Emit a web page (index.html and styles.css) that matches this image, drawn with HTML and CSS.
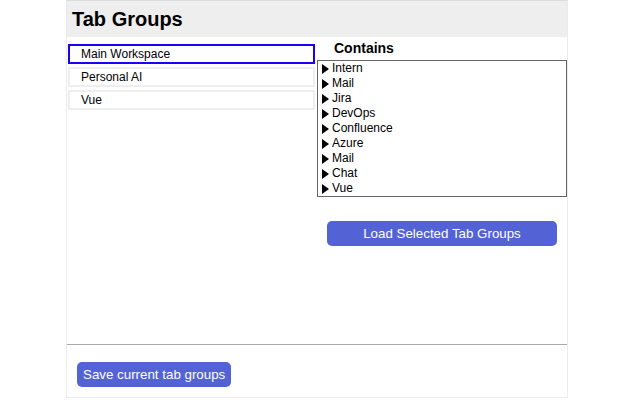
FILE: index.html
```html
<!DOCTYPE html>
<html>
<head>
<meta charset="utf-8">
<title>Tab Groups</title>
<link rel="stylesheet" href="styles.css">
</head>
<body>
<div class="container">
  <div class="header">Tab Groups</div>
  <div class="main">
    <div class="groups">
      <div class="group selected">Main Workspace</div>
      <div class="group">Personal AI</div>
      <div class="group">Vue</div>
    </div>
    <div class="contents">
      <div class="contains-title">Contains</div>
      <div class="tree">
        <div class="tree-item"><span class="arrow"></span>Intern</div>
        <div class="tree-item"><span class="arrow"></span>Mail</div>
        <div class="tree-item"><span class="arrow"></span>Jira</div>
        <div class="tree-item"><span class="arrow"></span>DevOps</div>
        <div class="tree-item"><span class="arrow"></span>Confluence</div>
        <div class="tree-item"><span class="arrow"></span>Azure</div>
        <div class="tree-item"><span class="arrow"></span>Mail</div>
        <div class="tree-item"><span class="arrow"></span>Chat</div>
        <div class="tree-item"><span class="arrow"></span>Vue</div>
      </div>
      <button class="btn load-btn">Load Selected Tab Groups</button>
    </div>
  </div>
  <div class="footer">
    <button class="btn save-btn">Save current tab groups</button>
  </div>
</div>
</body>
</html>
```
FILE: styles.css
```css
html, body {
  margin: 0;
  padding: 0;
  background: #fff;
}
body {
  font-family: "Liberation Sans", Arial, sans-serif;
  color: #000;
}
.container {
  margin-left: 66px;
  width: 500px;
  border: 1px solid #ebebeb;
  border-top-color: #dcdcdc;
}
.header {
  height: 36px;
  line-height: 37px;
  background: #eeeeee;
  padding-left: 5px;
  font-size: 20px;
  font-weight: bold;
}
.main {
  display: grid;
  grid-template-columns: 250px 250px;
  height: 307px;
}
.groups {
  padding-top: 7px;
}
.group {
  box-sizing: border-box;
  width: 247px;
  height: 20px;
  margin: 0 0 3px 1px;
  border: 2px solid #eeeeee;
  padding-left: 11px;
  font-size: 12px;
  line-height: 16px;
}
.group.selected {
  border-color: #1a00f5;
}
.contains-title {
  height: 23px;
  line-height: 23px;
  padding-left: 17px;
  font-size: 14px;
  font-weight: bold;
}
.tree {
  box-sizing: border-box;
  width: 250px;
  height: 137px;
  border: 1px solid #666666;
}
.tree-item {
  display: flex;
  align-items: center;
  height: 15px;
  padding-left: 4px;
  font-size: 12px;
  line-height: 15px;
}
.arrow {
  width: 0;
  height: 0;
  border-left: 7px solid #000;
  border-top: 5px solid transparent;
  border-bottom: 5px solid transparent;
  margin-right: 3px;
}
.btn {
  background: #5363d6;
  color: #fff;
  border: none;
  border-radius: 5px;
  font-family: "Liberation Sans", Arial, sans-serif;
  font-size: 13.333px;
  cursor: pointer;
}
.load-btn {
  display: block;
  width: 230px;
  height: 25px;
  margin: 24px 0 0 10px;
}
.footer {
  border-top: 1px solid #aaaaaa;
  padding: 17px 10px 10px;
}
.save-btn {
  display: block;
  height: 25px;
  padding: 0 6px;
}
```
